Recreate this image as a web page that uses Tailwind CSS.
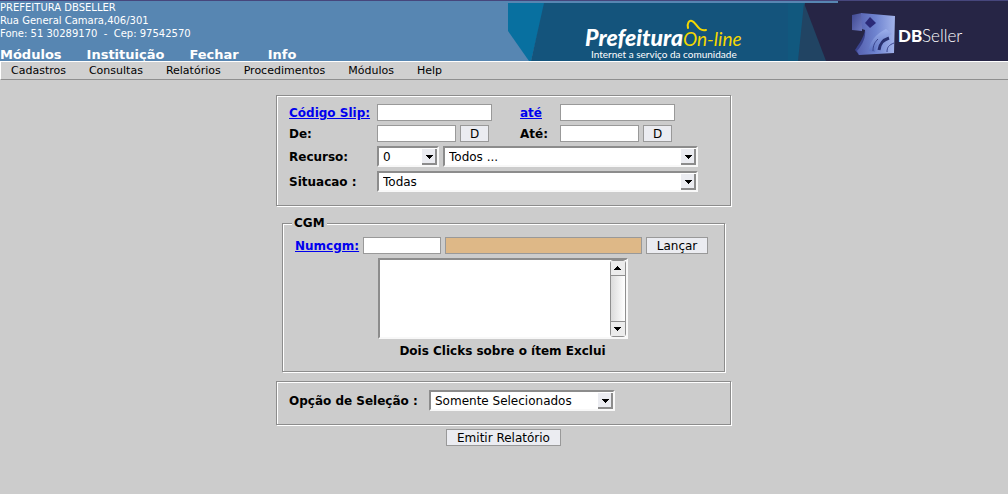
<!DOCTYPE html>
<html lang="pt-BR">
<head>
<meta charset="utf-8">
<meta name="viewport" content="width=device-width, initial-scale=1">
<title>Prefeitura On-line</title>
<script src="https://cdn.jsdelivr.net/npm/@tailwindcss/browser@4"></script>
</head>
<body class="min-h-screen bg-[#cccccc] font-['DejaVu_Sans',sans-serif] text-[12px] leading-4 text-black">
<svg class="hidden" aria-hidden="true">
  <symbol id="down" viewBox="0 0 7 4"><path shape-rendering="crispEdges" d="M0 0h7v1H6v1H5v1H4v1H3V3H2V2H1V1H0z"/></symbol>
  <symbol id="up" viewBox="0 0 7 4"><path shape-rendering="crispEdges" d="M3 0h1v1h1v1h1v1h1v1H0V3h1V2h1V1h1z"/></symbol>
</svg>

<header class="flex h-[61px] justify-between border-t border-[#46467c] bg-[#5786b2] text-white">
  <div class="flex flex-col justify-between">
    <address class="text-[10px] leading-[13px] whitespace-pre not-italic">PREFEITURA DBSELLER
Rua General Camara,406/301
Fone: 51 30289170  -  Cep: 97542570</address>
    <nav class="flex gap-[25px] text-[13px] leading-3 font-bold">
      <a href="#">Módulos</a><a href="#">Instituição</a><a href="#">Fechar</a><a href="#" class="ml-1">Info</a>
    </nav>
  </div>
  <svg class="h-[60px] w-[500px] shrink-0" viewBox="0 0 500 60" role="img" aria-label="Prefeitura On-line, DBSeller">
    <defs>
      <linearGradient id="cube" x1="0" y1="0" x2="1" y2="0"><stop offset="0" stop-color="#5560ae"/><stop offset=".5" stop-color="#6f84d0"/><stop offset="1" stop-color="#a3b4ea"/></linearGradient>
      <linearGradient id="side" x1="0" y1="0" x2="1" y2="1"><stop offset="0" stop-color="#3f4890"/><stop offset="1" stop-color="#6e79c0"/></linearGradient>
      <linearGradient id="ray" x1="0" y1="0" x2="0" y2="1"><stop offset="0" stop-color="#9db0ec"/><stop offset="1" stop-color="#5a70c0"/></linearGradient>
    </defs>
    <path fill="#0870a0" d="M0 2h37L23 60h-2L0 30z"/>
    <path fill="#14547c" d="M36 2h264v58H23z"/>
    <path fill="#262545" d="M296 2h34V0h170v60H296z"/>
    <path fill="#11587e" d="M280 2h17l-7 58h-10z"/>
    <path fill="#214463" d="M296 2l22 58h-28z"/>
    <text x="77" y="45" font-family="Lato,sans-serif" font-size="23" font-weight="900" font-style="italic" fill="#fff">Prefeitura</text>
    <text x="175" y="45" font-family="Lato,sans-serif" font-size="19" font-style="italic" fill="#f5d800">On-line</text>
    <path fill="none" stroke="#f5d800" stroke-width="2" stroke-linecap="round" d="M180 27c-1-5 1-8 4-7 4 1 6 11 14 9"/>
    <text x="83" y="57" font-family="Lato,sans-serif" font-size="10" fill="#fff">Internet a serviço da comunidade</text>
    <path fill="url(#side)" d="M344 14l10-2v18l-10-1z"/>
    <path fill="#39428c" d="M357 29c-1 7-6 14-10 20l4 5 14-3z"/>
    <path fill="url(#cube)" d="M353 12l34 3-1 37-35 2-2-4c6-7 9-14 8-21l-3-1z"/>
    <path fill="#2b2a78" d="M362 16l6 6-6 5-5-5z"/>
    <path fill="url(#ray)" d="M361 50c0-9 7-17 17-22l6 5c-9 4-16 10-17 18z"/>
    <path fill="none" stroke="#28306f" stroke-width="3" d="M381 37c-6 2-9 5-10 12"/>
    <path fill="none" stroke="#39448c" stroke-width="1" d="M386 42c-5 2-7 4-7 9M365 50c0-6 2-9 5-12"/>
    <text x="390" y="41" font-family="Lato,sans-serif" font-size="17" font-weight="900" fill="#fff">DB</text>
    <text x="414" y="41" font-family="Lato,sans-serif" font-size="17" font-weight="300" fill="#fff">Seller</text>
  </svg>
</header>

<nav class="flex h-[19px] gap-[23px] border-t border-b border-l border-t-white border-b-[#8f8f8f] border-l-white bg-[#d0d0d0] pl-[10px] text-[11px] leading-[17px]">
  <a href="#">Cadastros</a><a href="#">Consultas</a><a href="#">Relatórios</a><a href="#">Procedimentos</a><a href="#">Módulos</a><a href="#">Help</a>
</nav>

<main class="pt-[15px]">
<form class="mx-auto flex w-[456px] flex-col items-center pr-px">
  <fieldset class="w-full border border-[#8c8c8c] px-3 pt-2 pb-[13px] shadow-[1px_1px_0_#fff,inset_1px_1px_0_#fff]">
    <div class="grid grid-cols-[88px_143px_40px_auto] items-center gap-y-1">
      <label for="slip1" class="font-bold"><a href="#" class="text-[#0000ee] underline">Código Slip:</a></label>
      <input id="slip1" class="h-[17px] w-[115px] border border-[#999] bg-white px-1">
      <label for="slip2" class="font-bold"><a href="#" class="text-[#0000ee] underline">até</a></label>
      <input id="slip2" class="h-[17px] w-[115px] border border-[#999] bg-white px-1">
      <label for="de" class="font-bold">De:</label>
      <div class="flex gap-1"><input id="de" class="h-[17px] w-[79px] border border-[#999] bg-white px-1"><button type="button" class="h-[17px] w-[29px] border border-[#999] bg-[#ebecf1] leading-[17px]">D</button></div>
      <label for="ate" class="font-bold">Até:</label>
      <div class="flex gap-1"><input id="ate" class="h-[17px] w-[79px] border border-[#999] bg-white px-1"><button type="button" class="h-[17px] w-[29px] border border-[#999] bg-[#ebecf1] leading-[17px]">D</button></div>
      <label for="recurso" class="font-bold">Recurso:</label>
      <div class="col-span-3 flex gap-1">
        <div class="relative h-[21px] w-[62px]">
          <select id="recurso" class="block h-full w-full appearance-none border-2 border-t-[#8c8c8c] border-r-[#f8f8f8] border-b-[#f8f8f8] border-l-[#8c8c8c] bg-white pl-1"><option>0</option></select>
          <span class="pointer-events-none absolute top-[3px] right-[2px] flex h-4 w-[15px] items-center justify-center border-r-2 border-b-2 border-[#8c8c8c] bg-[#ebecf1] pt-[2px] pl-[2px]"><svg class="h-1 w-[7px]"><use href="#down"/></svg></span>
        </div>
        <div class="relative h-[21px] w-[255px]">
          <select aria-label="Descrição do recurso" class="block h-full w-full appearance-none border-2 border-t-[#8c8c8c] border-r-[#f8f8f8] border-b-[#f8f8f8] border-l-[#8c8c8c] bg-white pl-1"><option>Todos ...</option></select>
          <span class="pointer-events-none absolute top-[3px] right-[2px] flex h-4 w-[15px] items-center justify-center border-r-2 border-b-2 border-[#8c8c8c] bg-[#ebecf1] pt-[2px] pl-[2px]"><svg class="h-1 w-[7px]"><use href="#down"/></svg></span>
        </div>
      </div>
      <label for="situacao" class="font-bold">Situacao :</label>
      <div class="relative col-span-3 h-[21px] w-[321px]">
        <select id="situacao" class="block h-full w-full appearance-none border-2 border-t-[#8c8c8c] border-r-[#f8f8f8] border-b-[#f8f8f8] border-l-[#8c8c8c] bg-white pl-1"><option>Todas</option></select>
        <span class="pointer-events-none absolute top-[3px] right-[2px] flex h-4 w-[15px] items-center justify-center border-r-2 border-b-2 border-[#8c8c8c] bg-[#ebecf1] pt-[2px] pl-[2px]"><svg class="h-1 w-[7px]"><use href="#down"/></svg></span>
      </div>
    </div>
  </fieldset>

  <fieldset class="mt-[9px] w-[443px] border border-[#8c8c8c] px-3 pb-3 shadow-[1px_1px_0_#fff,inset_1px_1px_0_#fff]">
    <legend class="-ml-[3px] bg-[#cccccc] px-[2px] font-bold">CGM</legend>
    <div class="mt-[6px] flex items-center gap-1">
      <label for="numcgm" class="w-16 font-bold"><a href="#" class="text-[#0000ee] underline">Numcgm:</a></label>
      <input id="numcgm" class="h-[17px] w-[78px] border border-[#999] bg-white px-1">
      <input aria-label="Nome" readonly class="h-[17px] w-[197px] border border-[#999] bg-[#deb887] px-1">
      <button type="button" class="h-[17px] w-[62px] border border-[#999] bg-[#ebecf1] leading-[17px]">Lançar</button>
    </div>
    <div class="mt-1 pr-[2px]">
      <div class="mx-auto flex h-[81px] w-[250px] border-2 border-t-[#8c8c8c] border-r-[#f8f8f8] border-b-[#f8f8f8] border-l-[#8c8c8c] bg-white">
        <select aria-label="CGM selecionados" multiple class="min-w-0 flex-1 appearance-none overflow-hidden bg-white"></select>
        <div class="flex w-4 flex-col rounded-[3px] border border-[#8f8f8f] bg-linear-to-r from-[#dcdcdc] to-white">
          <span class="flex h-[15px] items-center justify-center border-b border-[#8f8f8f] bg-[#ececec]"><svg class="h-1 w-[7px]"><use href="#up"/></svg></span>
          <span class="flex-1"></span>
          <span class="flex h-[15px] items-center justify-center border-t border-[#8f8f8f] bg-[#ececec]"><svg class="h-1 w-[7px]"><use href="#down"/></svg></span>
        </div>
      </div>
      <p class="mt-1 text-center font-bold">Dois Clicks sobre o ítem Exclui</p>
    </div>
  </fieldset>

  <fieldset class="mt-[9px] w-full border border-[#8c8c8c] px-3 pt-2 pb-[13px] shadow-[1px_1px_0_#fff,inset_1px_1px_0_#fff]">
    <div class="flex items-center gap-1">
      <label for="opcao" class="w-[136px] font-bold whitespace-nowrap">Opção de Seleção :</label>
      <div class="relative h-[21px] w-[186px]">
        <select id="opcao" class="block h-full w-full appearance-none border-2 border-t-[#8c8c8c] border-r-[#f8f8f8] border-b-[#f8f8f8] border-l-[#8c8c8c] bg-white pl-1"><option>Somente Selecionados</option></select>
        <span class="pointer-events-none absolute top-[3px] right-[2px] flex h-4 w-[15px] items-center justify-center border-r-2 border-b-2 border-[#8c8c8c] bg-[#ebecf1] pt-[2px] pl-[2px]"><svg class="h-1 w-[7px]"><use href="#down"/></svg></span>
      </div>
    </div>
  </fieldset>
  <button type="button" class="mt-1 h-[17px] w-[115px] border border-[#999] bg-[#ebecf1] leading-[17px]">Emitir Relatório</button>
</form>
</main>
</body>
</html>
